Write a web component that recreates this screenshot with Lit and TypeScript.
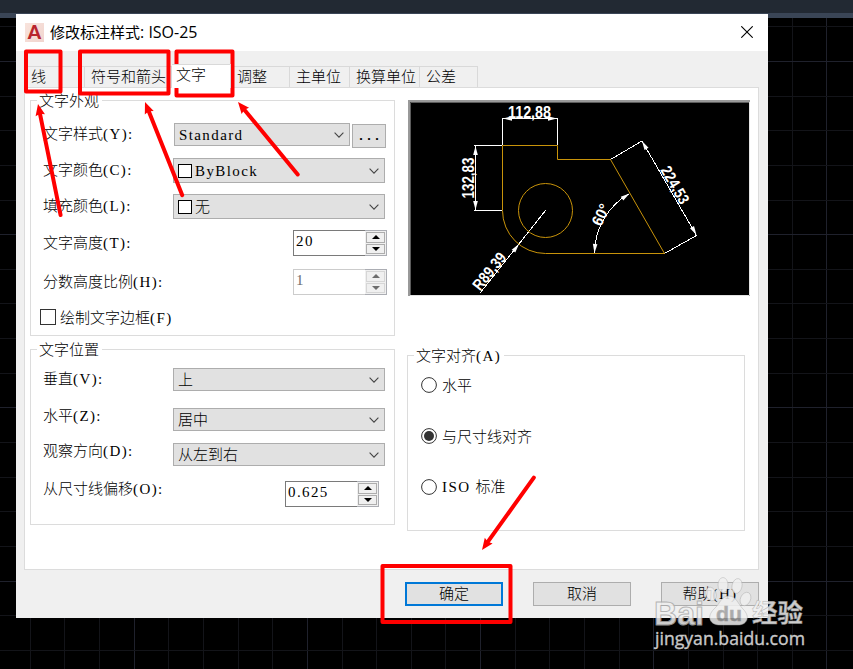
import { LitElement, html, svg, css } from "lit";
import { customElement, property } from "lit/decorators.js";

// Half-width characters are set in a light serif on roughly an 8px pitch, full-width ones on 15px.
const mixed = (s: string) =>
  s.split(/([\x20-\x7e]+)/).filter(Boolean).map((p) => (/^[\x20-\x7e]/.test(p) ? html`<span class="l">${p}</span>` : p));

const base = css`
  * { box-sizing: border-box; }
  :host { font: 15px/18px "Noto Sans CJK SC", sans-serif; font-weight: 300; color: #000; }
  .l { font-family: "Liberation Serif", serif; font-size: 15px; font-weight: 400; letter-spacing: 1.4px; white-space: pre; }
`;

@customElement("combo-box")
class ComboBox extends LitElement {
  @property() value = "";
  @property({ type: Boolean }) swatch = false;
  static styles = [base, css`
    :host { display: flex; align-items: center; box-sizing: border-box; height: 23px; background: #e1e1e1; border: 1px solid #adadad; padding: 0 5px 0 4px; }
    :host([swatch]) { height: 25px; }
    .sw { width: 14px; height: 14px; background: #fff; border: 1px solid #000; margin-right: 3px; }
    .v { flex: 1; margin-top: -1px; }
    svg { width: 10px; height: 6px; }
  `];
  render() {
    return html`${this.swatch ? html`<span class="sw"></span>` : ""}<span class="v">${mixed(this.value)}</span><svg viewBox="0 0 10 6"><path d="M.6 .7 L5 5.1 L9.4 .7" fill="none" stroke="#444" stroke-width="1.1"/></svg>`;
  }
}

@customElement("spin-box")
class SpinBox extends LitElement {
  @property() value = "";
  @property({ type: Boolean }) off = false;
  static styles = [base, css`
    :host { display: flex; width: 94px; height: 26px; background: #fff; color: #000; box-sizing: border-box; }
    .v { flex: 1; border: 1px solid #7a7a7a; border-right: 0; padding: 0 0 0 2px; }
    .b { width: 22px; border: 1px solid #abadb3; border-left: 0; background: #f0f0f0; padding: 1px; display: flex; flex-direction: column; gap: 1px; }
    .b i { flex: 1; border: 1px solid #adadad; display: flex; align-items: center; justify-content: center; }
    svg { width: 8px; height: 4px; display: block; }
    :host([off]) { color: #6d6d6d; }
    :host([off]) .v { border-color: #ccc; }
    :host([off]) i { border-color: #d6d6d6; }
  `];
  render() {
    return html`<span class="v">${mixed(this.value)}</span><span class="b"><i><svg viewBox="0 0 8 4"><path d="M4 0 L8 4 H0Z" fill="currentColor"/></svg></i><i><svg viewBox="0 0 8 4"><path d="M0 0 H8 L4 4Z" fill="currentColor"/></svg></i></span>`;
  }
}

@customElement("dim-preview")
class DimPreview extends LitElement {
  static styles = css`
    :host { display: block; width: 342px; height: 196px; background: #000; }
    svg { display: block; }
    .w { fill: none; stroke: #fff; } .y { fill: none; stroke: #c8930a; } .h { fill: #fff; }
    text { fill: #fff; font: bold 16px "Liberation Sans", sans-serif; }
  `;
  head(x: number, y: number, a: number) {
    return svg`<path class="h" d="M0 0 L-9 -2.3 V2.3Z" transform="translate(${x} ${y}) rotate(${a})"/>`;
  }
  label(x: number, y: number, a: number, s: string, w: number) {
    return svg`<text transform="translate(${x} ${y}) rotate(${a})" textLength=${w} lengthAdjust="spacingAndGlyphs">${s}</text>`;
  }
  render() {
    return html`<svg width="342" height="196" viewBox="408 100 342 196">
      <path d="M408 296 V100 H750 V102 H410 V296Z" fill="#999"/><path d="M410.5 295 V102.5 H749" fill="none" stroke="#5c5c5c"/>
      <path d="M410 295.5 H749.5 V102" fill="none" stroke="#e3e3e3"/>
      <path class="w" shape-rendering="crispEdges" d="M502.5 145 V118.5 H557.5 V145 M502 145.5 H474 M502 210.5 H474 M475.5 145 V210 M545.5 210.5 L480 293 M610.5 159.5 L642 141 L696.5 235.5 L664.5 253.5 M594.5 253.5 A69.5 69.5 0 0 1 629.5 193.5"/>
      <path class="y" d="M557.5 145.5 H502.5 V210.5 A43 43 0 0 0 545.5 253.5 H664.5 L610.5 159.5 H557.5Z"/>
      <circle class="y" cx="545.5" cy="210.5" r="27"/>
      ${this.head(503, 118.5, 180)}${this.head(557, 118.5, 0)}
      ${this.head(475.5, 146, -90)}${this.head(475.5, 210, 90)}
      ${this.head(519, 244, -52)}${this.head(642, 141, -120)}${this.head(696.5, 235, 60)}
      ${this.head(594.5, 253, 94)}${this.head(629.5, 193.5, -34)}
      ${this.label(508, 117.5, 0, "112,88", 43)}
      ${this.label(473.5, 198.5, -90, "132,83", 41)}
      ${this.label(480, 291.5, -51, "R89,39", 43)}
      ${this.label(601, 227, -64, "60°", 22)}
      ${this.label(660, 170, 60, "224,53", 41)}
    </svg>`;
  }
}

@customElement("app-root")
class AppRoot extends LitElement {
  static styles = [base, css`
    :host { display: block; position: relative; box-sizing: border-box; width: 853px; height: 669px; overflow: hidden; background: #000; padding: 14px 0 0 16px; }
    .bg, .ink { position: absolute; left: 0; top: 0; }
    .ink { pointer-events: none; }
    .dlg { position: relative; width: 752px; height: 604px; background: #f0f0f0; display: flex; flex-direction: column; }
    .title { height: 37px; background: #fff; display: flex; align-items: center; padding: 0 15px 1px 9px; }
    .logo { width: 19px; height: 19px; background: linear-gradient(135deg, #f8e3dc, #f1d5cf); color: #b9252d; font: 900 19px/18px Lato, sans-serif; text-align: center; margin-right: 6px; }
    .name { flex: 1; font: 15px/20px "Open Sans", "Noto Sans CJK SC", sans-serif; font-weight: 400; }
    .iso { font-size: 16px; white-space: pre; }
    .tabs { height: 36px; padding: 15px 0 0 8px; display: flex; }
    .tab { height: 21px; border: solid #d9d9d9; border-width: 1px 1px 0 0; padding: 0 0 0 6px; }
    .tab.first { border-left-width: 1px; }
    .tab.on { height: 24px; margin: -2px 0 -1px; background: #fff; padding: 0 0 0 4px; z-index: 1; }
    .t60 { width: 60px; } .t61 { width: 61px; } .t87 { width: 87px; } .t59 { width: 59px; } .t70 { width: 70px; } .t58 { width: 58px; }
    .page { margin: 0 9px 0 8px; height: 483px; background: #fff; border: 1px solid #dcdcdc; display: flex; gap: 12px; padding: 12px 0 0 5px; }
    .left { width: 365px; display: flex; flex-direction: column; gap: 13px; }
    .right { width: 343px; display: flex; flex-direction: column; gap: 59px; }
    .right dim-preview { margin-left: 1px; }
    .group { position: relative; border: 1px solid #dcdcdc; }
    .cap { position: absolute; left: 6px; top: -10px; height: 18px; background: #fff; padding: 0 3px 0 2px; white-space: nowrap; }
    .g1 { height: 236px; padding-top: 16px; } .g2 { height: 176px; padding-top: 10px; } .g3 { height: 176px; width: 338px; padding: 21px 0 0 13px; }
    .row { display: flex; align-items: center; padding-left: 12px; }
    .row > .lab { width: 130px; white-space: nowrap; padding-bottom: 2px; }
    .h35 { height: 35px; } .h37 { height: 37px; } .h38 { height: 38px; } .h40 { height: 40px; } .h30 { height: 30px; } .h39 { height: 39px; } .h41 { height: 41px; } .h29 { height: 29px; } .h50 { height: 50px; }
    .row > .up { padding-bottom: 9px; } .row > .upper { padding-bottom: 12px; }
    .full { width: 212px; }
    .style { width: 176px; margin: 0 2px 0 1px; }
    .dots { width: 34px; height: 24px; margin-top: 3px; background: #e1e1e1; border: 1px solid #adadad; text-align: center; font: 700 13.33px/24px "Liberation Mono", monospace; }
    .sp1 { margin-left: 120px; } .sp2 { margin-left: 112px; }
    .check { padding-left: 9px; gap: 4px; }
    .box { width: 16px; height: 16px; border: 1px solid #333; background: #fff; }
    .radio { display: flex; align-items: center; gap: 5px; height: 16px; margin-bottom: 35px; }
    .radio svg { width: 16px; height: 16px; }
    .radio span { margin-top: -1px; }
    .foot { display: flex; gap: 30px; padding: 12px 0 0 389px; }
    .btn { width: 98px; height: 24px; border: 1px solid #adadad; background: #e1e1e1; text-align: center; line-height: 20px; }
    .btn.ok { border: 2px solid #0078d7; line-height: 18px; }
    .mk { font-family: "Liberation Sans", sans-serif; font-weight: 700; }
  `];

  arrow(x1: number, y1: number, x2: number, y2: number) {
    const a = (Math.atan2(y2 - y1, x2 - x1) * 180) / Math.PI;
    const n = Math.hypot(x2 - x1, y2 - y1);
    return svg`<g transform="translate(${x2} ${y2}) rotate(${a})"><path d="M${-n + 2} 0 H-9" stroke="#f00" stroke-width="4" stroke-linecap="round"/><path d="M0 0 L-11.5 -4.8 L-10 0 L-11.5 4.8Z" fill="#f00"/></g>`;
  }

  radio(s: string, on = false) {
    return html`<div class="radio"><svg viewBox="0 0 16 16"><circle cx="8" cy="8" r="7.4" fill="#fff" stroke="#333"/>${on ? svg`<circle cx="8" cy="8" r="5" fill="#333"/>` : ""}</svg><span>${mixed(s)}</span></div>`;
  }

  grid() {
    const out = [];
    for (let i = 0; i < 25; i++) {
      const x = Math.round(-4.4 + i * 34.64 - 0.5) + 0.5;
      out.push(svg`<path d="M${x} 18 V669" stroke=${i % 5 === 4 ? "#1f212c" : "#131419"}/>`);
    }
    for (let i = 0; i < 19; i++) {
      const y = Math.round(26.8 + i * 34.64 - 0.5) + 0.5;
      out.push(svg`<path d="M0 ${y} H853" stroke=${i % 5 === 1 ? "#1f212c" : "#131419"}/>`);
    }
    return out;
  }

  render() {
    return html`
      <svg class="bg" width="853" height="669">${this.grid()}<rect width="853" height="13" fill="#222933"/><rect y="13" width="853" height="5" fill="#3a4556"/></svg>
      <div class="dlg">
        <div class="title"><span class="logo">A</span><span class="name">修改标注样式<span class="iso">: ISO-25</span></span><svg width="12" height="12" viewBox="0 0 12 12"><path d="M.3 .3 L11.7 11.7 M11.7 .3 L.3 11.7" stroke="#000" stroke-width="1.1"/></svg></div>
        <div class="tabs">
          <div class="tab first t61">线</div><div class="tab t87">符号和箭头</div><div class="tab on t59">文字</div><div class="tab t59">调整</div><div class="tab t60">主单位</div><div class="tab t70">换算单位</div><div class="tab t58">公差</div>
        </div>
        <div class="page">
          <div class="left">
            <div class="group g1"><span class="cap">文字外观</span>
              <div class="row h35"><span class="lab">${mixed("文字样式(Y):")}</span><combo-box class="style" value="Standard"></combo-box><span class="dots">...</span></div>
              <div class="row h37"><span class="lab">${mixed("文字颜色(C):")}</span><combo-box class="full" swatch value="ByBlock"></combo-box></div>
              <div class="row h35"><span class="lab">${mixed("填充颜色(L):")}</span><combo-box class="full" swatch value="无"></combo-box></div>
              <div class="row h38"><span class="lab">${mixed("文字高度(T):")}</span><spin-box class="sp1" value="20"></spin-box></div>
              <div class="row h40"><span class="lab">${mixed("分数高度比例(H):")}</span><spin-box class="sp1" off value="1"></spin-box></div>
              <div class="row h30 check"><span class="box"></span><span>${mixed("绘制文字边框(F)")}</span></div>
            </div>
            <div class="group g2"><span class="cap">文字位置</span>
              <div class="row h39"><span class="lab">${mixed("垂直(V):")}</span><combo-box class="full" value="上"></combo-box></div>
              <div class="row h41"><span class="lab up">${mixed("水平(Z):")}</span><combo-box class="full" value="居中"></combo-box></div>
              <div class="row h29"><span class="lab up">${mixed("观察方向(D):")}</span><combo-box class="full" value="从左到右"></combo-box></div>
              <div class="row h50"><span class="lab upper">${mixed("从尺寸线偏移(O):")}</span><spin-box class="sp2" value="0.625"></spin-box></div>
            </div>
          </div>
          <div class="right">
            <dim-preview></dim-preview>
            <div class="group g3"><span class="cap">${mixed("文字对齐(A)")}</span>
              ${this.radio("水平")}${this.radio("与尺寸线对齐", true)}${this.radio("ISO 标准")}
            </div>
          </div>
        </div>
        <div class="foot"><div class="btn ok">确定</div><div class="btn">取消</div><div class="btn">${mixed("帮助(H)")}</div></div>
      </div>
      <svg class="ink" width="853" height="669">
        <g fill="none" stroke="#f00" stroke-width="4" stroke-linejoin="round">
          <rect x="26" y="51.5" width="34.5" height="40"/><rect x="80" y="51.5" width="88.5" height="42"/><rect x="176.5" y="51.5" width="56" height="44"/><rect x="382.5" y="566" width="128" height="56"/>
        </g>
        ${this.arrow(61, 217, 38, 104)}${this.arrow(183, 197, 145, 102)}${this.arrow(299, 176, 238, 102)}${this.arrow(535, 476, 482, 550)}
        <g fill="#f0f0f0" opacity=".85" stroke="#aaa" stroke-width=".5">
          <ellipse cx="711" cy="594" rx="5" ry="7" transform="rotate(-20 711 594)"/><ellipse cx="723" cy="585" rx="5" ry="7.5"/><ellipse cx="737" cy="586" rx="5" ry="7.5" transform="rotate(12 737 586)"/><ellipse cx="745.5" cy="599" rx="5" ry="7" transform="rotate(25 745.5 599)"/>
          <path d="M729 596 C736 596 738 604 743 609 C751 617 747 625 738 625 C732 625 726 625 720 625 C710 625 706 617 714 609 C720 604 721 596 729 596Z"/>
          <text class="mk" x="654" y="624.5" font-size="34" stroke-width="1" textLength="50" lengthAdjust="spacingAndGlyphs">Bai</text>
          <text class="mk" x="716" y="621" font-size="21" textLength="26" lengthAdjust="spacingAndGlyphs" fill="#a0a0a0">du</text>
          <text x="752" y="622" font-size="25" font-weight="700" font-family="Noto Sans CJK SC, sans-serif" textLength="51" lengthAdjust="spacingAndGlyphs">经验</text>
        </g>
        <text x="655" y="645" font-size="18.5" font-family="Open Sans, sans-serif" font-weight="400" fill="#c8c8c8" stroke="#c8c8c8" stroke-width=".4" textLength="150" lengthAdjust="spacingAndGlyphs">jingyan.baidu.com</text>
      </svg>`;
  }
}
